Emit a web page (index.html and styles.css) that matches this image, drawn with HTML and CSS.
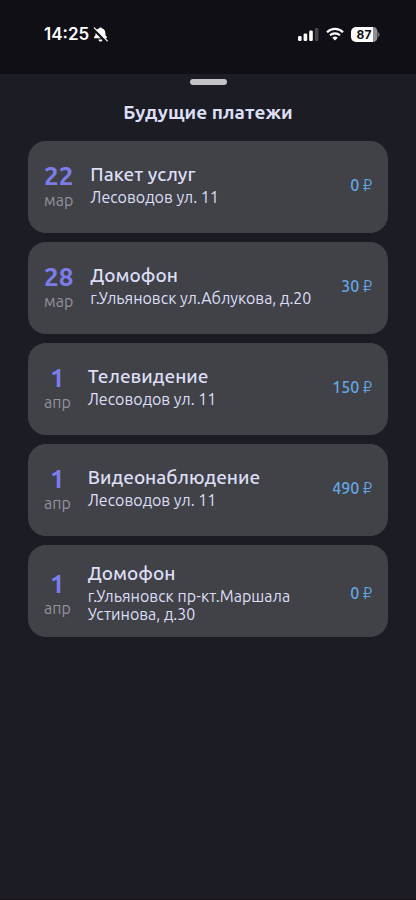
FILE: index.html
```html
<!DOCTYPE html>
<html lang="ru">
<head>
<meta charset="utf-8">
<meta name="viewport" content="width=device-width, initial-scale=1">
<title>Будущие платежи</title>
<link rel="stylesheet" href="styles.css">
</head>
<body>
<header class="status">
  <div class="status-left">
    <span class="clock">14:25</span>
    <svg class="bell" viewBox="0 0 16 16" width="15" height="15" aria-hidden="true">
      <path fill="#fff" d="M8 .4c.9 0 1.600.5 1.700 1.200 2.200.6 3.400 2.300 3.400 4.500 0 2.600.8 3.600 1.700 4.600.5.600.2 1.400-.7 1.400H1.900c-.9 0-1.200-.8-.7-1.400.9-1 1.700-2 1.700-4.600 0-2.200 1.200-3.900 3.400-4.500C6.400.9 7.100.4 8 .4zM5.700 13.200h4.600c-.2 1.300-1.100 2.200-2.300 2.200s-2.100-.9-2.300-2.200z"/>
      <path d="M.6 2.200 14 15.600" stroke="#100f15" stroke-width="3"/>
      <path d="M1.400 1 15.200 14.800" stroke="#fff" stroke-width="1.300" stroke-linecap="round"/>
    </svg>
  </div>
  <div class="status-right">
    <svg width="21" height="14" viewBox="0 0 21 14" aria-hidden="true">
      <g fill="#fff"><rect x="0" y="9" width="3.600" height="5" rx="1.200"/><rect x="5.600" y="6.500" width="3.600" height="7.500" rx="1.200"/><rect x="11.200" y="3.500" width="3.600" height="10.500" rx="1.200"/></g>
      <rect x="16.800" y="1" width="3.600" height="13" rx="1.200" fill="#45444a"/>
    </svg>
    <svg width="18" height="14" viewBox="0 0 18 14" aria-hidden="true">
      <g fill="none" stroke="#fff" stroke-width="2.200"><path d="M1 5.200a11.400 11.400 0 0 1 16 0"/><path d="M4 8.300a7.200 7.200 0 0 1 10 0"/></g>
      <path fill="#fff" d="M9 13.400 6.300 10.700a3.900 3.900 0 0 1 5.400 0z"/>
    </svg>
    <svg width="29" height="15" viewBox="0 0 29 15" role="img" aria-label="87%">
      <path fill="#fff" d="M5 0h17.500v15H5a5 5 0 0 1-5-5V5a5 5 0 0 1 5-5z"/>
      <path fill="#8e8d92" d="M22.500 0a4 5 0 0 1 4 5v5a4 5 0 0 1-4 5z"/>
      <path fill="#8e8d92" d="M27.300 5c1.600.9 1.600 4.100 0 5z"/>
      <text class="charge" x="13" y="12" text-anchor="middle">87</text>
    </svg>
  </div>
</header>
<main class="sheet">
  <div class="grabber"></div>
  <h1>Будущие платежи</h1>
  <ul class="payments">
    <li class="card"><div class="row">
      <div class="date"><span class="day">22</span><span class="month">мар</span></div>
      <div class="info"><h2>Пакет услуг</h2><p>Лесоводов ул. 11</p></div>
      <div class="amount">0 <span>₽</span></div>
    </div></li>
    <li class="card"><div class="row">
      <div class="date"><span class="day">28</span><span class="month">мар</span></div>
      <div class="info"><h2>Домофон</h2><p>г.Ульяновск ул.Аблукова, д.20</p></div>
      <div class="amount">30 <span>₽</span></div>
    </div></li>
    <li class="card"><div class="row">
      <div class="date"><span class="day">1</span><span class="month">апр</span></div>
      <div class="info"><h2>Телевидение</h2><p>Лесоводов ул. 11</p></div>
      <div class="amount">150 <span>₽</span></div>
    </div></li>
    <li class="card"><div class="row">
      <div class="date"><span class="day">1</span><span class="month">апр</span></div>
      <div class="info"><h2>Видеонаблюдение</h2><p>Лесоводов ул. 11</p></div>
      <div class="amount">490 <span>₽</span></div>
    </div></li>
    <li class="card"><div class="row">
      <div class="date"><span class="day">1</span><span class="month">апр</span></div>
      <div class="info"><h2>Домофон</h2><p>г.Ульяновск пр-кт.Маршала Устинова, д.30</p></div>
      <div class="amount">0 <span>₽</span></div>
    </div></li>
  </ul>
</main>
</body>
</html>
```
FILE: styles.css
```css
* { box-sizing: border-box; }
body {
  margin: 0;
  min-height: 100vh;
  display: flex;
  flex-direction: column;
  background: #100f15;
  color: #dcdff5;
  font-family: Ubuntu, "Noto Sans", sans-serif;
}
h1, h2, p, ul { margin: 0; padding: 0; }
.status {
  height: 74px;
  padding: 0 36px 6px 44px;
  display: flex;
  align-items: center;
  justify-content: space-between;
}
.status svg { display: block; }
.status-left { display: flex; align-items: center; gap: 4px; }
.clock { font: 600 17px/24px Inter, sans-serif; color: #fff; }
.status-right { display: flex; align-items: center; gap: 7px; }
.charge { font: 700 12px Inter, sans-serif; fill: #100f15; }
.sheet {
  flex: 1;
  padding: 5px 28px 28px;
  background: #1c1c25;
  border-bottom: 1px solid #1b141c;
}
.grabber {
  width: 37px;
  height: 6px;
  margin: 0 auto 15px;
  border-radius: 3px;
  background: #c4c3c8;
}
h1 { font-size: 19px; line-height: 24px; font-weight: 700; text-align: center; }
.payments {
  margin-top: 17px;
  list-style: none;
  display: flex;
  flex-direction: column;
  gap: 9px;
}
.card {
  min-height: 92px;
  padding: 16px 16px 14px;
  border-radius: 18px;
  background: #414148;
}
.row { display: flex; align-items: center; gap: 17px; }
.date { display: flex; flex-direction: column; align-items: center; padding-top: 6px; }
.day { font-size: 26px; line-height: 26px; font-weight: 700; color: #7c7de8; }
.month { font-size: 16px; line-height: 22px; color: #92929b; }
.info { flex: 1; min-width: 0; }
h2 { margin-bottom: 2px; font-size: 19px; line-height: 24px; font-weight: 500; }
.info p { font-size: 16px; line-height: 18px; }
.amount { padding-top: 2px; font-size: 16px; line-height: 22px; font-weight: 500; color: #65a7e3; white-space: nowrap; }
.amount span { font-weight: 400; }
```
